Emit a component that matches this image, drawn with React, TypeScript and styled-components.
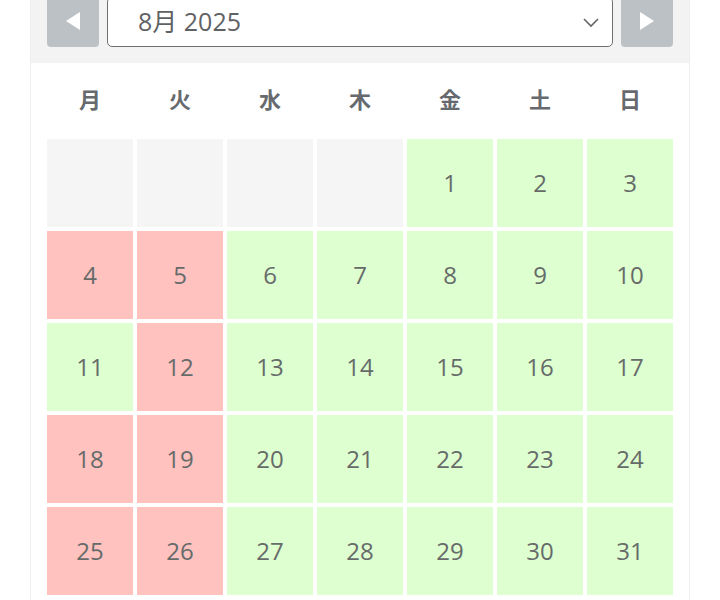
import React from "react";
import styled, { createGlobalStyle } from "styled-components";

const Global = createGlobalStyle`
  html, body { margin: 0; padding: 0; background: #ffffff; }
  body { font-family: "Open Sans", "Noto Sans CJK JP", sans-serif; overflow: hidden; }
`;

const Page = styled.div`
  width: 720px;
  height: 600px;
  overflow: hidden;
`;

const Panel = styled.div`
  width: 660px;
  margin: -20px 0 0 30px;
  border: 1px solid #eeeeee;
  box-sizing: border-box;
  background: #ffffff;
`;

const Header = styled.div`
  display: flex;
  align-items: stretch;
  gap: 8px;
  padding: 16px 16px 16px 16px;
  background: #f3f3f3;
`;

const NavButton = styled.button`
  width: 52px;
  height: 50px;
  flex: none;
  border: none;
  border-radius: 4px;
  background: #bcc1c5;
  display: flex;
  align-items: center;
  justify-content: center;
  padding: 0 0 3px;
  box-sizing: border-box;
`;

const Select = styled.div`
  flex: 1;
  height: 50px;
  box-sizing: border-box;
  border: 1px solid #6f6f6f;
  border-radius: 5px;
  background: #ffffff;
  display: flex;
  align-items: center;
  justify-content: space-between;
  padding: 0 12px 5px 30px;
  font-family: "Open Sans", "Noto Sans CJK JP", sans-serif;
  font-size: 25px;
  color: #5f6265;
`;

const Chevron = styled.svg`
  margin-top: 4px;
`;

const Weekdays = styled.div`
  display: grid;
  grid-template-columns: repeat(7, 86px);
  column-gap: 4px;
  padding: 0 16px;
  height: 76px;
  align-items: center;
`;

const Weekday = styled.div`
  text-align: center;
  font-family: "Noto Sans CJK JP", sans-serif;
  font-weight: 700;
  font-size: 22px;
  color: #666a6e;
  padding-bottom: 6px;
`;

const Grid = styled.div`
  display: grid;
  grid-template-columns: repeat(7, 86px);
  grid-auto-rows: 88px;
  gap: 4px;
  padding: 0 16px 16px;
`;

type Status = "empty" | "open" | "full";

const Cell = styled.div<{ $status: Status }>`
  background: ${(p) =>
    p.$status === "empty" ? "#f5f5f5" : p.$status === "full" ? "#ffc2bf" : "#deffcf"};
  display: flex;
  align-items: center;
  justify-content: center;
  font-family: "Open Sans", sans-serif;
  font-size: 24px;
  color: #666b6a;
  padding-bottom: 2px;
  box-sizing: border-box;
`;

const full = new Set([4, 5, 12, 18, 19, 25, 26]);

const cells: { day?: number; status: Status }[] = [
  ...Array.from({ length: 4 }, () => ({ status: "empty" as Status })),
  ...Array.from({ length: 31 }, (_, i) => ({
    day: i + 1,
    status: (full.has(i + 1) ? "full" : "open") as Status,
  })),
];

export default function App() {
  return (
    <Page>
      <Global />
      <Panel>
        <Header>
          <NavButton aria-label="前月">
            <svg width="16" height="20" viewBox="0 0 16 20">
              <polygon points="15,1 15,19 1,10" fill="#ffffff" />
            </svg>
          </NavButton>
          <Select>
            <span>8月 2025</span>
            <Chevron width="18" height="12" viewBox="0 0 18 12">
              <polyline points="2,3 9,10 16,3" fill="none" stroke="#666" strokeWidth="1.6" />
            </Chevron>
          </Select>
          <NavButton aria-label="翌月">
            <svg width="16" height="20" viewBox="0 0 16 20">
              <polygon points="1,1 1,19 15,10" fill="#ffffff" />
            </svg>
          </NavButton>
        </Header>
        <Weekdays>
          {["月", "火", "水", "木", "金", "土", "日"].map((d) => (
            <Weekday key={d}>{d}</Weekday>
          ))}
        </Weekdays>
        <Grid>
          {cells.map((c, i) => (
            <Cell key={i} $status={c.status}>
              {c.day ?? ""}
            </Cell>
          ))}
        </Grid>
      </Panel>
    </Page>
  );
}
